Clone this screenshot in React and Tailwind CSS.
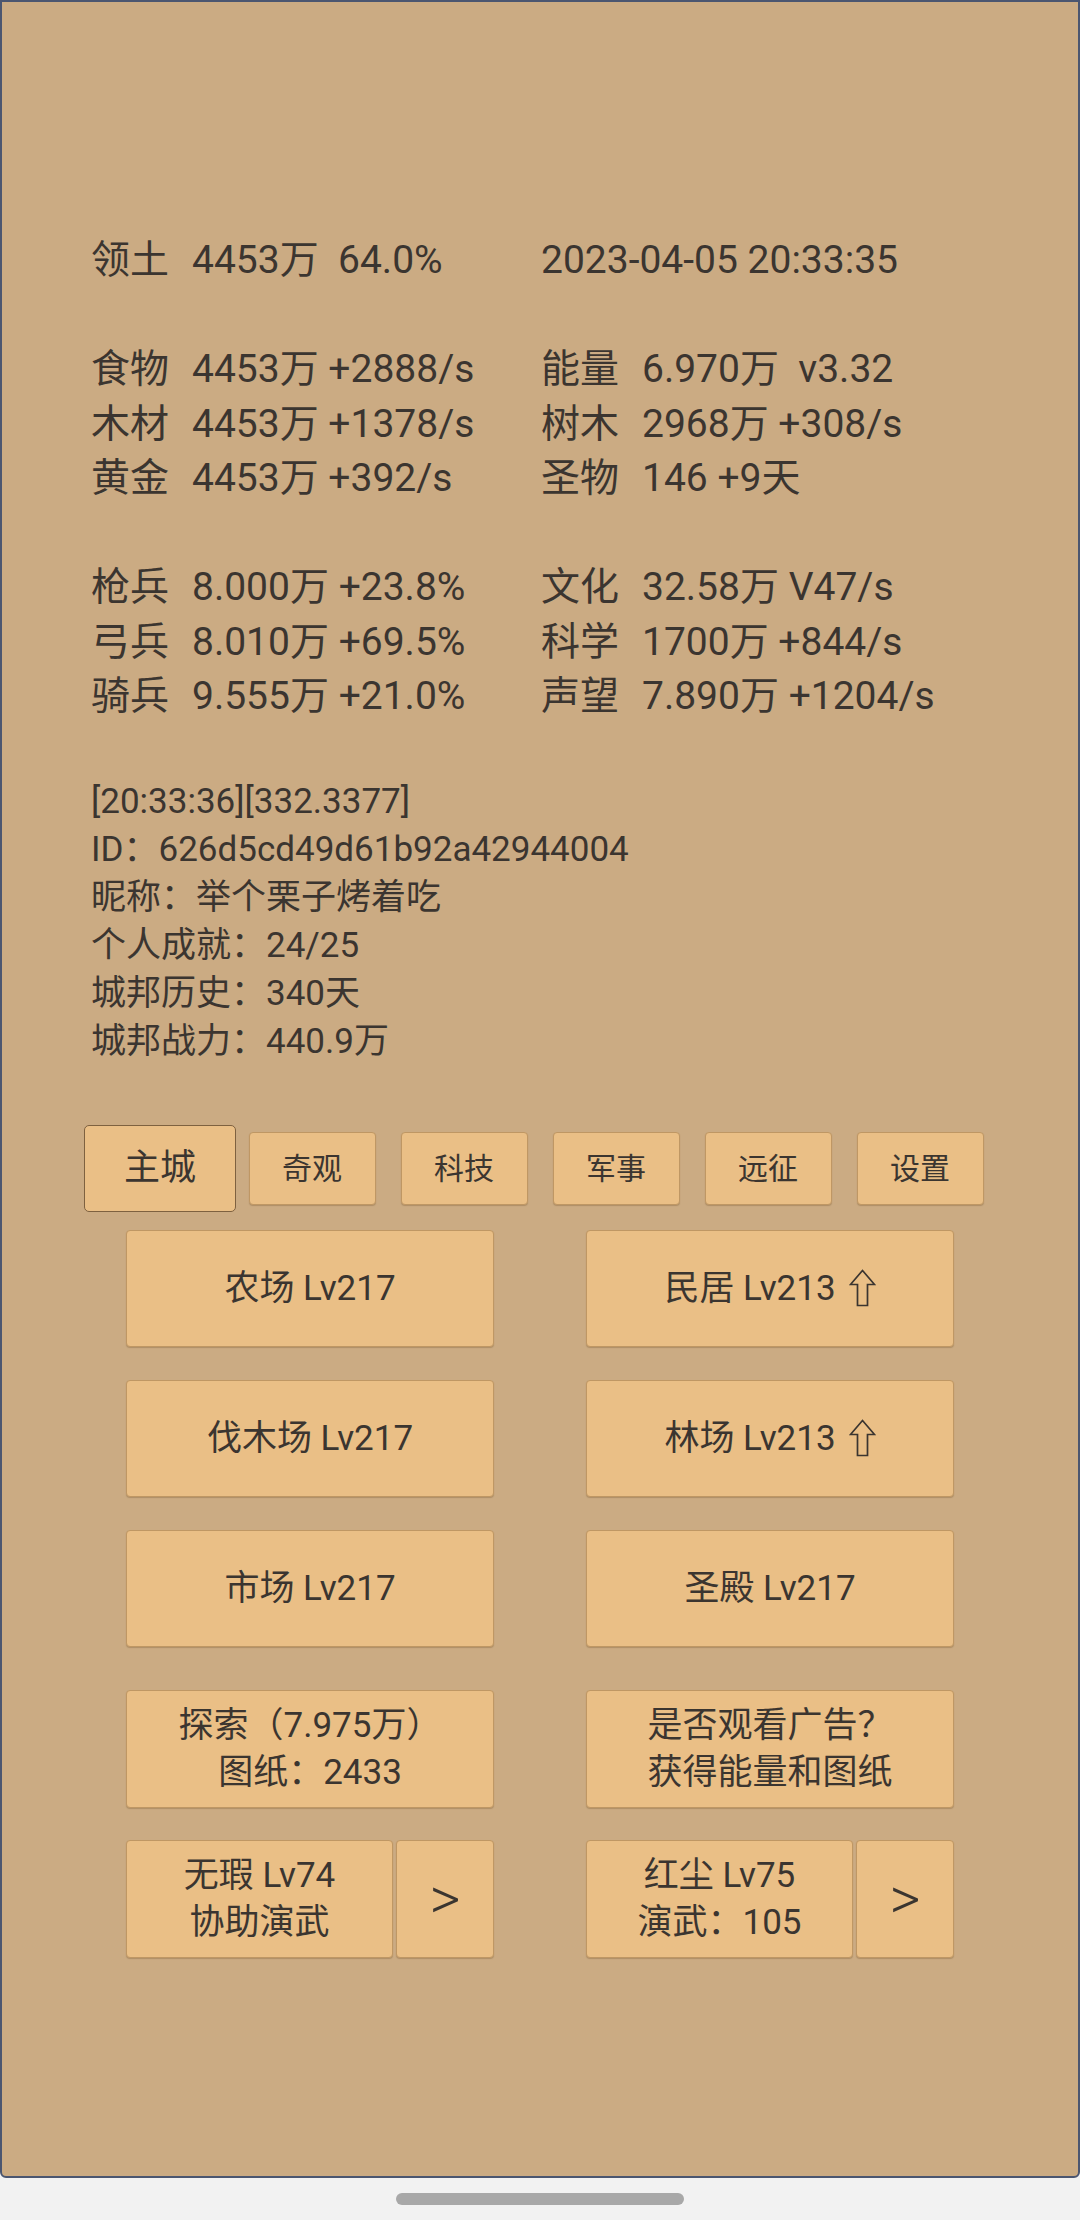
import React from 'react'

const font = "font-['Roboto','Noto_Sans_CJK_SC','DejaVu_Sans',sans-serif]"

const statRows = [
  [['领土', '4453万  64.0%'], ['', '2023-04-05 20:33:35']],
  null,
  [['食物', '4453万 +2888/s'], ['能量', '6.970万  v3.32']],
  [['木材', '4453万 +1378/s'], ['树木', '2968万 +308/s']],
  [['黄金', '4453万 +392/s'], ['圣物', '146 +9天']],
  null,
  [['枪兵', '8.000万 +23.8%'], ['文化', '32.58万 V47/s']],
  [['弓兵', '8.010万 +69.5%'], ['科学', '1700万 +844/s']],
  [['骑兵', '9.555万 +21.0%'], ['声望', '7.890万 +1204/s']],
]

const infoLines = [
  '[20:33:36][332.3377]',
  'ID：626d5cd49d61b92a42944004',
  '昵称：举个栗子烤着吃',
  '个人成就：24/25',
  '城邦历史：340天',
  '城邦战力：440.9万',
]

const tabs = ['主城', '奇观', '科技', '军事', '远征', '设置']

const StatCell = ({ label, value }) => (
  <div className="w-[450px] flex whitespace-pre">
    {label ? (
      <>
        <span className="w-[101px] shrink-0">{label}</span>
        <span>{value}</span>
      </>
    ) : (
      <span>{value}</span>
    )}
  </div>
)

const Btn = ({ children, className = '' }) => (
  <div
    className={`bg-[#eabf86] border border-[#bf9764] rounded-[4px] shadow-[0_1px_1px_rgba(90,60,20,0.25)] flex flex-col items-center justify-center text-[35px] leading-[47px] ${className}`}
  >
    {children}
  </div>
)

// outlined up arrow (⇧)
const UpArrow = () => (
  <svg width="27" height="38" viewBox="0 0 27 38" className="ml-[13px]" fill="none">
    <path
      d="M13.5 1.5 L25.5 15.5 H18.5 V36.5 H8.5 V15.5 H1.5 Z"
      stroke="currentColor"
      strokeWidth="1.7"
      strokeLinejoin="miter"
    />
  </svg>
)

export default function App() {
  return (
    <div className={`w-[1080px] h-[2220px] bg-[#f2f2f2] flex flex-col text-[#3b3530] ${font}`}>
      <div className="h-[2178px] shrink-0 bg-[#cbab83] border-2 border-[#4b5670] rounded-b-[6px] flex flex-col pt-[231px]">
        {/* stats */}
        <div className="pl-[89px] text-[39px] leading-[54.5px]">
          {statRows.map((row, i) =>
            row ? (
              <div key={i} className="flex">
                <StatCell label={row[0][0]} value={row[0][1]} />
                <StatCell label={row[1][0]} value={row[1][1]} />
              </div>
            ) : (
              <div key={i} className="h-[54.5px]" />
            )
          )}
        </div>

        {/* info */}
        <div className="pl-[89px] mt-[54px] text-[35px] leading-[48px]">
          {infoLines.map((l) => (
            <div key={l}>{l}</div>
          ))}
        </div>

        {/* tabs */}
        <div className="mt-[59px] pl-[82px] flex h-[87px] items-center">
          {tabs.map((t, i) => (
            <div key={t} className="w-[152px] flex justify-center items-center">
              {i === 0 ? (
                <div className="w-[153px] h-[87px] bg-[#eabf86] border-[1.5px] border-[#7e6140] rounded-[5px] flex items-center justify-center text-[36px]">
                  {t}
                </div>
              ) : (
                <div className="w-[127px] h-[73px] bg-[#eabf86] border border-[#bf9764] rounded-[4px] shadow-[0_1px_1px_rgba(90,60,20,0.25)] flex items-center justify-center text-[30px]">
                  {t}
                </div>
              )}
            </div>
          ))}
        </div>

        {/* buildings */}
        <div className="mt-[18px] pl-[124px] flex flex-col">
          <div className="flex gap-[92px]">
            <Btn className="w-[368px] h-[117px]">农场 Lv217</Btn>
            <Btn className="w-[368px] h-[117px]">
              <div className="flex items-center">民居 Lv213<UpArrow /></div>
            </Btn>
          </div>
          <div className="flex gap-[92px] mt-[33px]">
            <Btn className="w-[368px] h-[117px]">伐木场 Lv217</Btn>
            <Btn className="w-[368px] h-[117px]">
              <div className="flex items-center">林场 Lv213<UpArrow /></div>
            </Btn>
          </div>
          <div className="flex gap-[92px] mt-[33px]">
            <Btn className="w-[368px] h-[117px]">市场 Lv217</Btn>
            <Btn className="w-[368px] h-[117px]">圣殿 Lv217</Btn>
          </div>
          <div className="flex gap-[92px] mt-[43px]">
            <Btn className="w-[368px] h-[118px]">
              <div>探索（7.975万）</div>
              <div>图纸：2433</div>
            </Btn>
            <Btn className="w-[368px] h-[118px]">
              <div>是否观看广告？</div>
              <div>获得能量和图纸</div>
            </Btn>
          </div>
          <div className="flex gap-[92px] mt-[32px]">
            <div className="w-[368px] flex gap-[3px]">
              <Btn className="w-[267px] h-[118px]">
                <div>无瑕 Lv74</div>
                <div>协助演武</div>
              </Btn>
              <Btn className="flex-1 h-[118px] text-[60px] font-light">&gt;</Btn>
            </div>
            <div className="w-[368px] flex gap-[3px]">
              <Btn className="w-[267px] h-[118px]">
                <div>红尘 Lv75</div>
                <div>演武：105</div>
              </Btn>
              <Btn className="flex-1 h-[118px] text-[60px] font-light">&gt;</Btn>
            </div>
          </div>
        </div>
      </div>
      <div className="flex-1 flex items-center justify-center">
        <div className="w-[288px] h-[12px] rounded-full bg-[#a8a8a8]" />
      </div>
    </div>
  )
}
